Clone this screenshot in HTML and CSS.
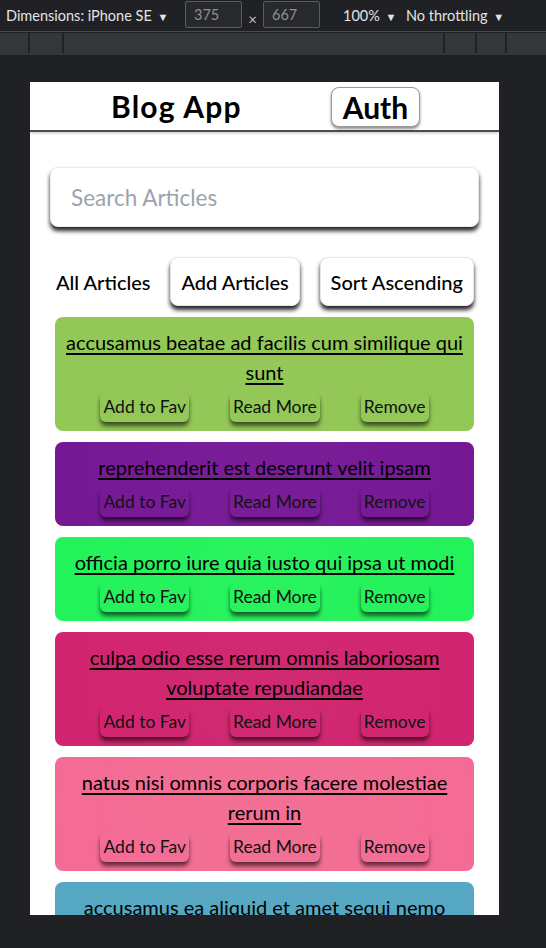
FILE: index.html
```html
<!DOCTYPE html>
<html lang="en">
<head>
<meta charset="utf-8">
<title>Blog App</title>
<link rel="stylesheet" href="styles.css">
</head>
<body>
<div class="toolbar">
  <span class="tb-item tb-dim">Dimensions: iPhone SE <span class="caret">▼</span></span>
  <span class="tb-input">375</span>
  <span class="tb-x">×</span>
  <span class="tb-input">667</span>
  <span class="tb-item tb-zoom">100% <span class="caret">▼</span></span>
  <span class="tb-item tb-throttle">No throttling <span class="caret">▼</span></span>
</div>
<div class="ruler">
  <div class="seg seg-a"></div>
  <div class="seg seg-b"></div>
  <div class="seg seg-c"></div>
  <div class="seg seg-d"></div>
  <div class="seg seg-e"></div>
  <div class="seg seg-f"></div>
</div>
<div class="stage">
  <div class="viewport">
    <header class="nav">
      <h1 class="brand">Blog App</h1>
      <button class="auth">Auth</button>
    </header>
    <main class="content">
      <input class="search" type="text" placeholder="Search Articles">
      <div class="controls">
        <span class="label">All Articles</span>
        <button class="ctrl-btn">Add Articles</button>
        <button class="ctrl-btn">Sort Ascending</button>
      </div>
      <div class="cards">
        <article class="card c1">
          <a class="title" href="#">accusamus beatae ad facilis cum similique qui sunt</a>
          <div class="actions"><button class="act">Add to Fav</button><button class="act">Read More</button><button class="act">Remove</button></div>
        </article>
        <article class="card c2">
          <a class="title" href="#">reprehenderit est deserunt velit ipsam</a>
          <div class="actions"><button class="act">Add to Fav</button><button class="act">Read More</button><button class="act">Remove</button></div>
        </article>
        <article class="card c3">
          <a class="title" href="#">officia porro iure quia iusto qui ipsa ut modi</a>
          <div class="actions"><button class="act">Add to Fav</button><button class="act">Read More</button><button class="act">Remove</button></div>
        </article>
        <article class="card c4">
          <a class="title" href="#">culpa odio esse rerum omnis laboriosam voluptate repudiandae</a>
          <div class="actions"><button class="act">Add to Fav</button><button class="act">Read More</button><button class="act">Remove</button></div>
        </article>
        <article class="card c5">
          <a class="title" href="#">natus nisi omnis corporis facere molestiae rerum in</a>
          <div class="actions"><button class="act">Add to Fav</button><button class="act">Read More</button><button class="act">Remove</button></div>
        </article>
        <article class="card c6">
          <a class="title" href="#">accusamus ea aliquid et amet sequi nemo</a>
          <div class="actions"><button class="act">Add to Fav</button><button class="act">Read More</button><button class="act">Remove</button></div>
        </article>
      </div>
    </main>
  </div>
</div>
</body>
</html>
```
FILE: styles.css
```css
* { box-sizing: border-box; }
html, body { margin: 0; padding: 0; }
body {
  background: #202124;
  font-family: "Lato", "Liberation Sans", sans-serif;
  width: 546px;
  height: 948px;
  overflow: hidden;
}

/* DevTools toolbar */
.toolbar {
  height: 32px;
  border-bottom: 1px solid #4a4b4e;
  display: flex;
  align-items: center;
  color: #e3e3e3;
  font-size: 14.5px;
  padding-left: 6px;
}
.caret { font-size: 11px; margin-left: 2px; }
.tb-dim { width: 179px; }
.tb-input {
  width: 57px;
  height: 27px;
  border: 1px solid #5b5c5f;
  border-radius: 2px;
  background: #28292c;
  color: #8f9093;
  padding-left: 8px;
  line-height: 25px;
  margin-top: -3px;
}
.tb-x { width: 21px; text-align: center; color: #bdbdbd; font-size: 15px; margin-top: 6px; }
.tb-zoom { margin-left: 23px; width: 63px; }

.ruler {
  height: 22px;
  margin-top: 1px;
  background: #35363a;
  display: flex;
}
.seg { height: 20px; border-right: 2px solid #202124; }
.seg-a { width: 30px; }
.seg-b { width: 34px; }
.seg-c { width: 381px; }
.seg-d { width: 32px; }
.seg-e { width: 30px; }
.seg-f { flex: 1; border-right: 0; }

/* Device viewport */
.stage { padding: 27px 0 0 30px; }
.viewport {
  width: 469px;
  height: 833px;
  background: #fff;
  overflow: hidden;
  color: #000;
}

.nav {
  height: 50px;
  display: flex;
  align-items: center;
  gap: 89px;
  padding-left: 81px;
  border-bottom: 2px solid #4d4d4d;
  box-shadow: 0 1px 3px rgba(0, 0, 0, 0.25);
}
.brand {
  margin: 0;
  font-size: 30px;
  font-weight: 700;
  line-height: 40px;
  letter-spacing: 1.2px;
}
.auth {
  font-family: inherit;
  font-size: 30px;
  font-weight: 700;
  line-height: 38px;
  padding: 0 11px;
  background: #fff;
  color: #000;
  border: 1px solid #9a9a9a;
  border-radius: 8px;
  box-shadow: 0 2px 3px rgba(0, 0, 0, 0.45);
  margin-top: 2px;
}

.content { padding: 35px 20px 0; }
.search {
  display: block;
  width: 100%;
  height: 60px;
  border: 1px solid #ececec;
  border-radius: 8px;
  padding: 0 20px;
  font-family: inherit;
  font-size: 22.5px;
  color: #111;
  background: #fff;
  box-shadow: 0 4px 4px rgba(0, 0, 0, 0.85);
  outline: none;
}
.search::placeholder { color: #9ca3af; }

.controls {
  margin: 30px 5px 0;
  display: flex;
  align-items: center;
  justify-content: space-between;
  font-size: 20px;
  font-weight: 500;
}
.label { padding-left: 1px; }
.ctrl-btn {
  font-family: inherit;
  font-size: 20px;
  font-weight: 500;
  color: #000;
  height: 49px;
  padding: 0 10px;
  background: #fff;
  border: 1px solid #e6e6e6;
  border-radius: 8px;
  box-shadow: 0 4px 4px rgba(0, 0, 0, 0.85);
}

.cards {
  margin: 11px 5px 0;
  display: flex;
  flex-direction: column;
  gap: 11px;
}
.card {
  border-radius: 8px;
  padding: 10px 8px 9px;
  text-align: center;
}
.title {
  display: block;
  color: #000;
  font-size: 20px;
  line-height: 30px;
  text-decoration: underline;
  text-underline-offset: 3px;
}
.actions {
  display: flex;
  justify-content: center;
  gap: 41px;
  margin-top: 5px;
}
.act {
  font-family: inherit;
  font-size: 17.5px;
  color: #111;
  height: 30px;
  line-height: 28px;
  padding: 0 3px;
  border: 0;
  border-radius: 6px;
  background: transparent;
  box-shadow: 0 4px 4px rgba(0, 0, 0, 0.6);
}
.c1 { background: radial-gradient(circle at 50% 45%, #94c85a, #92c855); }
.c2 { background: radial-gradient(circle at 50% 45%, #7a1e98, #761894); }
.c3 { background: radial-gradient(circle at 50% 45%, #2af25f, #22f35a); }
.c4 { background: radial-gradient(circle at 50% 45%, #d02a72, #d2246f); }
.c5 { background: radial-gradient(circle at 50% 45%, #f27093, #f56b96); }
.c6 { background: radial-gradient(circle at 50% 45%, #58a8c2, #55a7c3); }
```
